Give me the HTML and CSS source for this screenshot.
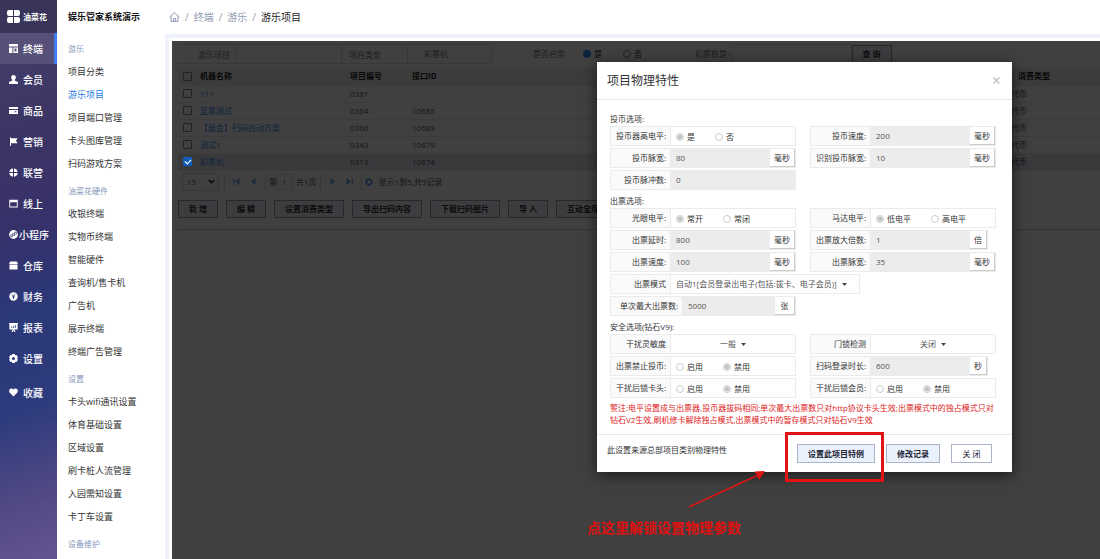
FILE: index.html
```html
<!DOCTYPE html>
<html lang="zh-CN">
<head>
<meta charset="utf-8">
<title>娱乐管家系统演示</title>
<link rel="stylesheet" href="styles.css">
</head>
<body>
<div class="app">
  <nav class="nav">
    <div class="brand">
      <svg width="13" height="13" viewBox="0 0 13 13" fill="#fff"><path d="M2 0h4v6H2a2 2 0 0 1-2-2V2a2 2 0 0 1 2-2zM7 0h4a2 2 0 0 1 2 2v2a2 2 0 0 1-2 2H7zM2 7h4v6H2a2 2 0 0 1-2-2V9a2 2 0 0 1 2-2zM7 7h4a2 2 0 0 1 2 2v2a2 2 0 0 1-2 2H7z"/></svg>
      <span>油菜花</span>
    </div>
    <a class="nav-item active" href="#"><svg class="ico" viewBox="0 0 9 9"><path d="M0 0h9v2.4H0zM0 3.4h3.4V9H0zM4.4 3.4H9V9H4.4zM5.5 4.6v3h2v-3z" fill-rule="evenodd"/></svg>终端</a>
    <a class="nav-item" href="#"><svg class="ico" viewBox="0 0 9 9"><circle cx="4.5" cy="2.5" r="2.4"/><path d="M3.3 4h2.4v1.6L9 7v2H0V7l3.3-1.4z"/></svg>会员</a>
    <a class="nav-item" href="#"><svg class="ico" viewBox="0 0 9 9"><path d="M0 1h9v2H0zM0 4h9v4H0zM5.5 5.2v1h2v-1z" fill-rule="evenodd"/></svg>商品</a>
    <a class="nav-item" href="#"><svg class="ico" viewBox="0 0 9 9"><path d="M1 0.6h1v0.6h6.6L7 3.7l1.6 2.6H2V9H1z"/></svg>营销</a>
    <a class="nav-item" href="#"><svg class="ico" viewBox="0 0 9 9"><path d="M4 0.4V4H0.3A4.2 4.2 0 0 1 4 .4zM5 .4A4.2 4.2 0 0 1 8.7 4H5zM0.3 5H4v3.7A4.2 4.2 0 0 1 .3 5zM5 5h3.7A4.2 4.2 0 0 1 5 8.700z"/></svg>联营</a>
    <a class="nav-item" href="#"><svg class="ico" viewBox="0 0 9 9"><path d="M0.3 0.8h8.400v7.600H0.300zM1.200 3.200v4.300h6.600V3.200z" fill-rule="evenodd"/></svg>线上</a>
    <a class="nav-item wide" href="#"><svg class="ico" viewBox="0 0 9 9"><circle cx="4.500" cy="4.500" r="4.400"/><path d="M5.300 6V3.200a1.100 1.100 0 1 1 1.200 1.200M3.800 3v2.800a1.100 1.100 0 1 1-1.200-1.200" fill="none" stroke="#38336a" stroke-width=".9"/></svg>小程序</a>
    <a class="nav-item" href="#"><svg class="ico" viewBox="0 0 9 9"><path d="M1.200 0.600h6.600L9 3H0zM0.500 3.600h8V8.500h-8z"/></svg>仓库</a>
    <a class="nav-item" href="#"><svg class="ico" viewBox="0 0 9 9"><circle cx="4.500" cy="4.500" r="4.200"/><path d="M3 2.400l1.500 2 1.500-2M4.500 4.400V7M3.200 4.800h2.600" fill="none" stroke="#2d3878" stroke-width=".9"/></svg>财务</a>
    <a class="nav-item" href="#"><svg class="ico" viewBox="0 0 9 9"><path d="M0 0h9v1H8.600v5.600H5.200L6.600 9H5.400L4.500 7.400 3.600 9H2.400l1.400-2.400H.4V1H0z"/><path d="M2.600 5V3.600M4.500 5V2.800M6.400 5V2" stroke="#2c3a7c" stroke-width=".8"/></svg>报表</a>
    <a class="nav-item" href="#"><svg class="ico" viewBox="0 0 9 9"><path d="M3.300 0h2.400l.5 1.300 1.400-.2L8.900 3.200 8.100 4.500l.8 1.300-1.300 2.100-1.400-.2L5.700 9H3.300l-.5-1.300-1.400.2L.1 5.800l.8-1.300L.1 3.200l1.300-2.100 1.400.2zM4.500 3a1.500 1.500 0 1 0 0 3 1.500 1.500 0 0 0 0-3z" fill-rule="evenodd"/></svg>设置</a>
    <a class="nav-item last" href="#"><svg class="ico" viewBox="0 0 9 9"><path d="M4.500 8.600L.8 4.800C-.6 3 .4.6 2.400.6c1 0 1.700.5 2.100 1.200C4.900 1.100 5.600.6 6.600.6c2 0 3 2.400 1.600 4.200z"/></svg>收藏</a>
  </nav>

  <aside class="side">
    <h1 class="side-title">娱乐管家系统演示</h1>
    <div class="side-list">
      <section class="group">
        <h2>游乐</h2>
        <a href="#">项目分类</a><a href="#" class="current">游乐项目</a><a href="#">项目端口管理</a><a href="#">卡头图库管理</a><a href="#">扫码游戏方案</a>
      </section>
      <section class="group">
        <h2>油菜花硬件</h2>
        <a href="#">收银终端</a><a href="#">实物币终端</a><a href="#">智能硬件</a><a href="#">查询机/售卡机</a><a href="#">广告机</a><a href="#">展示终端</a><a href="#">终端广告管理</a>
      </section>
      <section class="group">
        <h2>设置</h2>
        <a href="#">卡头wifi通讯设置</a><a href="#">体育基础设置</a><a href="#">区域设置</a><a href="#">刷卡桩人流管理</a><a href="#">入园需知设置</a><a href="#">卡丁车设置</a>
      </section>
      <section class="group">
        <h2>设备维护</h2>
      </section>
    </div>
  </aside>

  <main class="main">
    <div class="crumbs">
      <svg width="11" height="10" viewBox="0 0 11 10" fill="none" stroke="#8f9ab0" stroke-width="1"><path d="M.6 5L5.500.7 10.400 5M2 4.200v5.200h7V4.200M4.400 9.400V6.400h2.200v3"/></svg>
      <span>/</span><a href="#">终端</a><span>/</span><a href="#">游乐</a><span>/</span><b>游乐项目</b>
    </div>
    <div class="frame">
      <div class="content">
        <form class="filters">
          <label class="tag" for="f1">游乐项目</label><input class="box" id="f1">
          <label class="tag short" for="f2">项目类型</label><select class="box mid" id="f2"><option>彩票机</option></select>
          <span class="tag state">是否启用</span>
          <label class="pick"><input type="radio" class="radio blue" name="on" checked>是</label>
          <label class="pick"><input type="radio" class="radio" name="on">否</label>
          <label class="tag count" for="f3">扣票数是1</label><input class="box num" id="f3">
          <button type="button" class="btn">查 询</button>
        </form>
        <table class="grid">
          <thead><tr><th class="c0"><input type="checkbox" class="tick" aria-label="全选"></th><th class="c1">机器名称</th><th class="c2">项目编号</th><th class="c3">接口ID</th><th class="c4">消费类型</th></tr></thead>
          <tbody>
            <tr><td><input type="checkbox" class="tick" aria-label="111"></td><td><a href="#">111</a></td><td>0381</td><td></td><td>代币</td></tr>
            <tr><td><input type="checkbox" class="tick" aria-label="蓝票测试"></td><td><a href="#">蓝票测试</a></td><td>0364</td><td>10685</td><td>代币</td></tr>
            <tr><td><input type="checkbox" class="tick" aria-label="扫码启动方案"></td><td><a href="#">【展会】扫码启动方案</a></td><td>0360</td><td>10683</td><td>代币</td></tr>
            <tr><td><input type="checkbox" class="tick" aria-label="测试1"></td><td><a href="#">测试1</a></td><td>0343</td><td>10679</td><td>代币</td></tr>
            <tr class="picked"><td><input type="checkbox" class="tick" aria-label="彩票机" checked></td><td><a href="#">彩票机</a></td><td>0313</td><td>10674</td><td>代币</td></tr>
          </tbody>
        </table>
        <div class="pager">
          <select class="size" aria-label="每页条数"><option>15</option></select>
          <svg class="chev" width="7" height="5" viewBox="0 0 7 5" fill="none" stroke="#111" stroke-width="1.500"><path d="M.8 1l2.700 2.700L6.200 1"/></svg>
          <i class="bar"></i>
          <button type="button" class="pg" aria-label="首页"><svg width="7" height="7" viewBox="0 0 7 7"><path d="M0 0h1.200v7H0zM6.500 0v7L2 3.500z"/></svg></button>
          <button type="button" class="pg" aria-label="上一页"><svg width="7" height="7" viewBox="0 0 7 7"><path d="M5.500 0v7L1 3.500z"/></svg></button>
          <i class="bar"></i>
          <label class="pno">第<input value="1"></label><span>共1页</span>
          <i class="bar"></i>
          <button type="button" class="pg" aria-label="下一页"><svg width="7" height="7" viewBox="0 0 7 7"><path d="M1.500 0v7L6 3.500z"/></svg></button>
          <button type="button" class="pg" aria-label="末页"><svg width="7" height="7" viewBox="0 0 7 7"><path d="M.5 0v7L5 3.500zM5.800 0H7v7H5.800z"/></svg></button>
          <i class="bar"></i>
          <svg width="8" height="8" viewBox="0 0 8 8" fill="none" stroke="#4a94ee" stroke-width="1.700"><circle cx="4" cy="4" r="2.800"/></svg>
          <span class="total">显示1到5,共5记录</span>
        </div>
        <div class="tools">
          <button type="button" class="btn">新 增</button><button type="button" class="btn">编 辑</button><button type="button" class="btn long">设置消费类型</button><button type="button" class="btn long">导出扫码内容</button><button type="button" class="btn long">下载扫码图片</button><button type="button" class="btn">导 入</button><button type="button" class="btn long">互动宝库设置</button>
        </div>
        <div class="mask"></div>

        <div class="dialog" role="dialog" aria-labelledby="dlg">
          <header><h2 id="dlg">项目物理特性</h2><button type="button" class="close" aria-label="关闭窗口"><svg width="7" height="7" viewBox="0 0 7 7" stroke="#bbb" stroke-width="1.200"><path d="M.5.5l6 6M6.500.5l-6 6"/></svg></button></header>
          <form class="fields">
            <h3>投币选项:</h3>
            <div class="pair">
              <div class="row"><span class="lab">投币器高电平:</span><span class="opts"><label><input type="radio" class="radio" name="a" checked disabled>是</label><label><input type="radio" class="radio" name="a" disabled>否</label></span></div>
              <div class="row"><label class="lab" for="i1">投币速度:</label><input id="i1" value="200" readonly><span class="unit">毫秒</span></div>
              <div class="row"><label class="lab" for="i2">投币脉宽:</label><input id="i2" value="80" readonly><span class="unit">毫秒</span></div>
              <div class="row"><label class="lab" for="i3">识别投币脉宽:</label><input id="i3" value="10" readonly><span class="unit">毫秒</span></div>
              <div class="row"><label class="lab" for="i4">投币脉冲数:</label><input id="i4" value="0" readonly></div>
            </div>
            <h3>出票选项:</h3>
            <div class="pair">
              <div class="row"><span class="lab">光眼电平:</span><span class="opts"><label><input type="radio" class="radio" name="b" checked disabled>常开</label><label><input type="radio" class="radio" name="b" disabled>常闭</label></span></div>
              <div class="row"><span class="lab">马达电平:</span><span class="opts"><label><input type="radio" class="radio" name="c" checked disabled>低电平</label><label><input type="radio" class="radio" name="c" disabled>高电平</label></span></div>
              <div class="row"><label class="lab" for="i5">出票延时:</label><input id="i5" value="800" readonly><span class="unit">毫秒</span></div>
              <div class="row slim"><label class="lab" for="i6">出票放大倍数:</label><input id="i6" value="1" readonly><span class="unit">倍</span></div>
              <div class="row"><label class="lab" for="i7">出票速度:</label><input id="i7" value="100" readonly><span class="unit">毫秒</span></div>
              <div class="row"><label class="lab" for="i8">出票脉宽:</label><input id="i8" value="35" readonly><span class="unit">毫秒</span></div>
              <div class="row span"><label class="lab" for="s1">出票模式</label><span class="drop"><select id="s1"><option>自动1[会员登录出电子(包括:拔卡、电子会员)]</option></select><svg width="5" height="3" viewBox="0 0 5 3" fill="#444"><path d="M0 0h5L2.500 3z"/></svg></span></div>
              <div class="row big"><label class="lab" for="i9">单次最大出票数:</label><input id="i9" value="5000" readonly><span class="unit">张</span></div>
            </div>
            <h3>安全选项(钻石V9):</h3>
            <div class="pair">
              <div class="row"><label class="lab" for="s2">干扰灵敏度</label><span class="drop"><select id="s2"><option>一般</option></select><svg width="5" height="3" viewBox="0 0 5 3" fill="#444"><path d="M0 0h5L2.500 3z"/></svg></span></div>
              <div class="row"><label class="lab" for="s3">门锁检测</label><span class="drop"><select id="s3"><option>关闭</option></select><svg width="5" height="3" viewBox="0 0 5 3" fill="#444"><path d="M0 0h5L2.500 3z"/></svg></span></div>
              <div class="row"><span class="lab">出票禁止投币:</span><span class="opts"><label><input type="radio" class="radio" name="d" disabled>启用</label><label><input type="radio" class="radio" name="d" checked disabled>禁用</label></span></div>
              <div class="row slim"><label class="lab" for="i10">扫码登录时长:</label><input id="i10" value="600" readonly><span class="unit">秒</span></div>
              <div class="row"><span class="lab">干扰后锁卡头:</span><span class="opts"><label><input type="radio" class="radio" name="e" disabled>启用</label><label><input type="radio" class="radio" name="e" checked disabled>禁用</label></span></div>
              <div class="row"><span class="lab">干扰后锁会员:</span><span class="opts"><label><input type="radio" class="radio" name="f" disabled>启用</label><label><input type="radio" class="radio" name="f" checked disabled>禁用</label></span></div>
            </div>
            <p class="warn">警注:电平设置成与出票器,投币器拔码相同;单次最大出票数只对http协议卡头生效;出票模式中的独占模式只对<br>钻石V2生效,刷机修卡解除独占模式,出票模式中的暂存模式只对钻石V9生效</p>
          </form>
          <footer>
            <span class="src">此设置来源总部项目类别物理特性</span>
            <button type="button" class="act main-act">设置此项目特例</button>
            <button type="button" class="act">修改记录</button>
            <button type="button" class="act plain">关 闭</button>
          </footer>
          <div class="highlight"></div>
          <svg class="arrow" width="78" height="40" viewBox="0 0 78 40"><path d="M1 37L68 6" stroke="#dc1414" stroke-width="1.600"/><path d="M77 1L66.500 1.500 71 10z" fill="#dc1414"/></svg>
          <p class="note">点这里解锁设置物理参数</p>
        </div>
      </div>
    </div>
  </main>
</div>
</body>
</html>
```

FILE: styles.css
```css
* { box-sizing: border-box; }
body, h1, h2, h3, p { margin: 0; }
body { font: 8px/12px "Open Sans", "Noto Sans CJK SC", sans-serif; color: #333; overflow: hidden; }
a { color: inherit; text-decoration: none; }
button, input, select { font: inherit; color: inherit; margin: 0; padding: 0; border: 0; border-radius: 0; background: none; }
select { appearance: none; }
svg { display: block; flex: none; }

.app { display: flex; height: 100vh; }

/* primary navigation */
.nav { flex: 0 0 57px; background: linear-gradient(160deg, #45406a 0%, #3b3565 25%, #37316a 40%, #2b3878 55%, #2c3b7d 72%, #564b85 90%, #625490 100%); color: #fff; }
.brand { height: 33px; display: flex; align-items: center; gap: 3px; padding-left: 7px; background: #38345a; font-weight: 700; }
.nav-item { height: 31px; display: flex; align-items: center; gap: 5px; padding-left: 9px; font-size: 10px; font-weight: 500; white-space: nowrap; }
.nav-item.wide { gap: 1px; }
.nav-item.active { background: #575179; border-right: 3px solid #3d7ff0; }
.nav-item.last { margin-top: 3px; }
.ico { width: 9px; height: 9px; fill: #fff; }

/* secondary navigation */
.side { flex: 0 0 108px; overflow: hidden; background: #fff; }
.side-title { height: 34px; padding-left: 11px; font-size: 9px; line-height: 34px; color: #111; white-space: nowrap; }
.side-list { padding: 4px 0 0 11px; }
.group { margin-bottom: 5px; }
.group h2 { height: 22px; font-size: 8px; line-height: 22px; font-weight: 400; color: #8796b8; }
.group a { display: block; height: 23px; font-size: 9px; line-height: 23px; white-space: nowrap; }
.group a.current { color: #2c7be5; }

/* page area */
.main { flex: 1; min-width: 0; display: flex; flex-direction: column; }
.crumbs { height: 34px; display: flex; align-items: center; gap: 5px; padding-left: 4px; font-size: 10px; color: #8f9ab0; }
.crumbs b { font-weight: 400; color: #222; }
.frame { flex: 1; display: flex; border: solid #eff1f9; border-width: 4px 0 0 4px; padding: 3px 0 0 3px; }
.content { flex: 1; min-width: 0; position: relative; padding: 3px 0 0 6px; }
.mask { position: absolute; inset: 0; background: rgba(0, 0, 0, .75); }

.filters { height: 20px; display: flex; align-items: center; white-space: nowrap; }
.filters .tag { flex: 0 0 58px; height: 20px; line-height: 20px; padding-left: 20px; color: #777; border: solid #ddd; border-width: 1px 0; }
.filters .box { flex: 0 0 106px; min-width: 0; height: 20px; border: 1px solid #ddd; }
.filters .tag.short { flex-basis: 65px; padding-left: 7px; }
.filters .box.mid { flex-basis: 85px; padding-left: 16px; color: #777; }
.filters .tag.state { flex-basis: 91px; padding-left: 41px; border: 0; }
.filters .pick { flex: 0 0 40px; display: flex; align-items: center; gap: 3px; }
.filters .tag.count { flex-basis: 64px; padding-left: 32px; border: 0; }
.filters .box.num { flex: 0 1 120px; }
.filters .btn { flex: none; }
.radio { appearance: none; flex: none; width: 8px; height: 8px; border: 1px solid #888; border-radius: 50%; }
.radio.blue { border: 2px solid #2e8af8; background: #2e8af8; }

.grid { width: 100%; margin-top: 4px; border-collapse: collapse; table-layout: fixed; text-align: left; }
.grid th, .grid td { height: 17px; padding: 0; line-height: 16px; border-bottom: 1px solid #ececec; white-space: nowrap; }
.grid th { background: #f0f0f0; color: #222; }
.grid td { color: #555; }
.grid td a { color: #3d8bf0; }
.grid .c0 { width: 22px; }
.grid .c1 { width: 150px; }
.grid .c2 { width: 62px; }
.grid .c4 { width: 89px; padding-left: 7px; }
.grid .picked td { background: #e6e6f2; }
.tick { appearance: none; display: block; width: 9px; height: 9px; margin-left: 5px; border: 1px solid #888; border-radius: 1px; }
.tick:checked { background: #0f5cb8; border-color: #0f5cb8; position: relative; z-index: 1; }
.tick:checked::after { content: ""; display: block; width: 5px; height: 3px; margin: 1px; border: solid #fff; border-width: 0 0 1px 1px; transform: rotate(-45deg); }

.pager { height: 22px; display: flex; align-items: center; padding-left: 4px; color: #555; white-space: nowrap; }
.size { width: 37px; height: 18px; padding-left: 4px; border: 1px solid #ddd; }
.chev { margin-left: -11px; margin-right: 6px; }
.bar { width: 1px; height: 18px; margin: 0 3px; background: #ddd; }
.pg { width: 17px; height: 12px; fill: #6fa8ee; display: grid; place-items: center; }
.pno { display: flex; align-items: center; }
.pno input { width: 16px; height: 16px; margin-right: 3px; padding-left: 4px; border: 1px solid #ddd; }
.total { margin-left: 6px; }
.tools { display: flex; gap: 8px; padding: 7px 0 11px; border-bottom: 1px solid #ccc; overflow: hidden; }
.btn { flex: none; width: 40px; height: 18px; border: 1px solid #999fb0; background: #f2f4fa; font-weight: 700; white-space: nowrap; }
.btn.long { width: 70px; }

/* dialog */
.dialog { position: absolute; top: 21px; right: 88px; width: 415px; background: #fff; box-shadow: 0 3px 14px rgba(0, 0, 0, .6); }
.dialog header { height: 38px; display: flex; align-items: center; justify-content: space-between; padding: 0 12px 0 10px; border-bottom: 1px solid #e5e5e5; }
.dialog header h2 { font-size: 12px; font-weight: 400; line-height: 18px; }
.fields { padding: 12px 16px 8px 13px; white-space: nowrap; }
.fields h3 { height: 14px; font-size: 8px; line-height: 14px; font-weight: 400; }
.pair { display: grid; grid-template-columns: repeat(2, minmax(0, 1fr)); gap: 2px 14px; margin-bottom: 4px; }
.row { height: 20px; display: flex; border: 1px solid #ebebeb; }
.lab { flex: 0 0 60px; padding-right: 4px; line-height: 18px; text-align: right; background: #fafafa; border-right: 1px solid #ebebeb; }
.row input:not(.radio) { flex: 1; min-width: 0; padding-left: 5px; background: #ececec; color: #555; }
.unit { flex: 0 0 25px; line-height: 18px; text-align: center; border: solid #ccc; border-width: 0 1px 1px 0; }
.row.slim { margin-right: 8px; }
.slim .unit { flex-basis: 17px; }
.row.big { grid-column: 1; }
.big .lab { flex-basis: 72px; }
.big .unit { flex-basis: 20px; }
.row.span { grid-column: 1 / -1; justify-self: start; }
.opts { display: flex; align-items: center; gap: 20px; padding: 2px 0 0 5px; }
.opts label { display: flex; align-items: center; gap: 3px; }
.opts .radio { border-color: #ccc; }
.opts .radio:checked { background: radial-gradient(circle, #c2c2c2 0 2px, #fff 3px); }
.drop { flex: 1; display: flex; align-items: center; justify-content: center; gap: 5px; color: #555; }
.span .drop { padding: 0 12px 0 5px; }
.warn { color: #e01818; }
.dialog footer { height: 38px; display: flex; align-items: center; gap: 11px; padding: 0 20px 0 10px; border-top: 1px solid #e8e8e8; }
.src { flex: 1; padding-bottom: 8px; }
.act { width: 54px; height: 19px; border: 1px solid #a9b4c8; background: #eaf1fd; color: #223; font-weight: 700; }
.act.main-act { width: 78px; }
.act.plain { width: 41px; background: #fff; font-weight: 400; }

/* annotation over the dialog */
.highlight { position: absolute; right: 128px; bottom: -10px; width: 99px; height: 50px; border: 3px solid #e01414; }
.arrow { position: absolute; left: 91px; top: 100%; margin-top: -2px; }
.note { position: absolute; left: -10px; top: 100%; margin-top: 47px; font: 700 14px/20px "Liberation Serif", "Noto Sans CJK SC", serif; color: #e01010; white-space: nowrap; }
```
